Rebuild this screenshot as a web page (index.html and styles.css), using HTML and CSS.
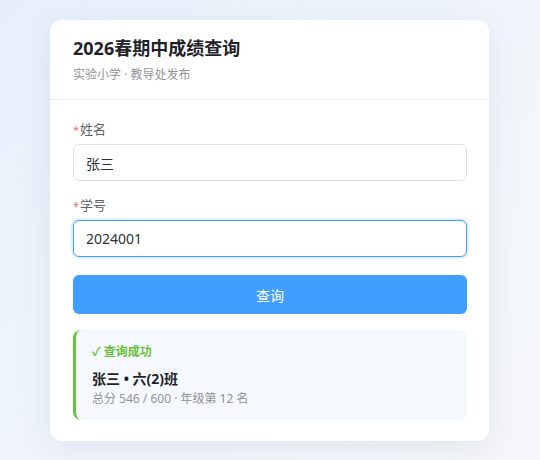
FILE: index.html
```html
<!DOCTYPE html>
<html>
    <head>
        <meta charset="utf-8">
        <title>成绩查询</title>
        <link rel="stylesheet" href="styles.css">
    </head>
    <body>
        <div class="card">
            <div class="card-header">
                <h1 class="title">2026春期中成绩查询</h1>
                <p class="subtitle">实验小学 · 教导处发布</p>
            </div>
            <form class="card-body">
                <div class="form-item">
                    <label class="label"><span class="req">*</span>姓名</label>
                    <input class="input" type="text" value="张三">
                </div>
                <div class="form-item">
                    <label class="label"><span class="req">*</span>学号</label>
                    <input class="input input-focus" type="text" value="2024001">
                </div>
                <button type="button" class="btn">查询</button>
                <div class="result">
                    <div class="result-status">✓ 查询成功</div>
                    <div class="result-name">张三 • 六(2)班</div>
                    <div class="result-meta">总分 546 / 600 · 年级第 12 名</div>
                </div>
            </form>
        </div>
    </body>
</html>
```

FILE: styles.css
```css
html, body {
    height: 100%;
}
body {
    margin: 0;
    padding: 20px 0;
    box-sizing: border-box;
    background: linear-gradient(135deg, #e6f0fc 0%, #f2f6fb 60%, #f5f7fa 100%);
    font-family: "Noto Sans", "Noto Sans CJK SC", sans-serif;
    color: #303133;
}
.card {
    width: 439px;
    margin: 0 0 0 50px;
    background: #fff;
    border-radius: 12px;
    box-shadow: 0 8px 32px rgba(60, 80, 120, 0.10);
    overflow: hidden;
}
.card-header {
    padding: 16px 22px 15px 23px;
    border-bottom: 1px solid #ebeef5;
}
.title {
    margin: 0;
    font-size: 18px;
    line-height: 24px;
    font-weight: 700;
    color: #1f2329;
}
.subtitle {
    margin: 6px 0 0 0;
    font-size: 12px;
    line-height: 18px;
    color: #909399;
}
.card-body {
    padding: 19px 22px 21px 23px;
}
.form-item {
    margin-bottom: 14px;
}
.label {
    display: block;
    height: 20px;
    font-size: 13px;
    line-height: 20px;
    color: #606266;
    margin-bottom: 5px;
}
.req {
    color: #f56c6c;
    font-size: 11px;
    line-height: 1;
    margin-right: 1px;
}
.input {
    display: block;
    width: 100%;
    box-sizing: border-box;
    height: 37px;
    padding: 0 12px;
    border: 1px solid #dcdfe6;
    border-radius: 6px;
    font-family: inherit;
    font-size: 14px;
    color: #303133;
    background: #fff;
    outline: none;
}
.input-focus {
    border-color: #409eff;
    box-shadow: 0 0 0 2px rgba(64, 158, 255, 0.15);
}
.btn {
    display: block;
    width: 100%;
    height: 39px;
    margin-top: 18px;
    border: none;
    border-radius: 6px;
    background: #409eff;
    color: #fff;
    font-family: inherit;
    font-size: 14px;
}
.result {
    margin-top: 16px;
    padding: 12px 16px 12px 16px;
    background: #f5f8fc;
    border-left: 3px solid #67c23a;
    border-radius: 8px;
}
.result-status {
    font-size: 12px;
    line-height: 20px;
    font-weight: 700;
    color: #67c23a;
}
.result-name {
    margin-top: 6px;
    font-size: 14px;
    line-height: 22px;
    font-weight: 700;
    color: #1f2329;
}
.result-meta {
    font-size: 12px;
    line-height: 18px;
    color: #909399;
}
```
